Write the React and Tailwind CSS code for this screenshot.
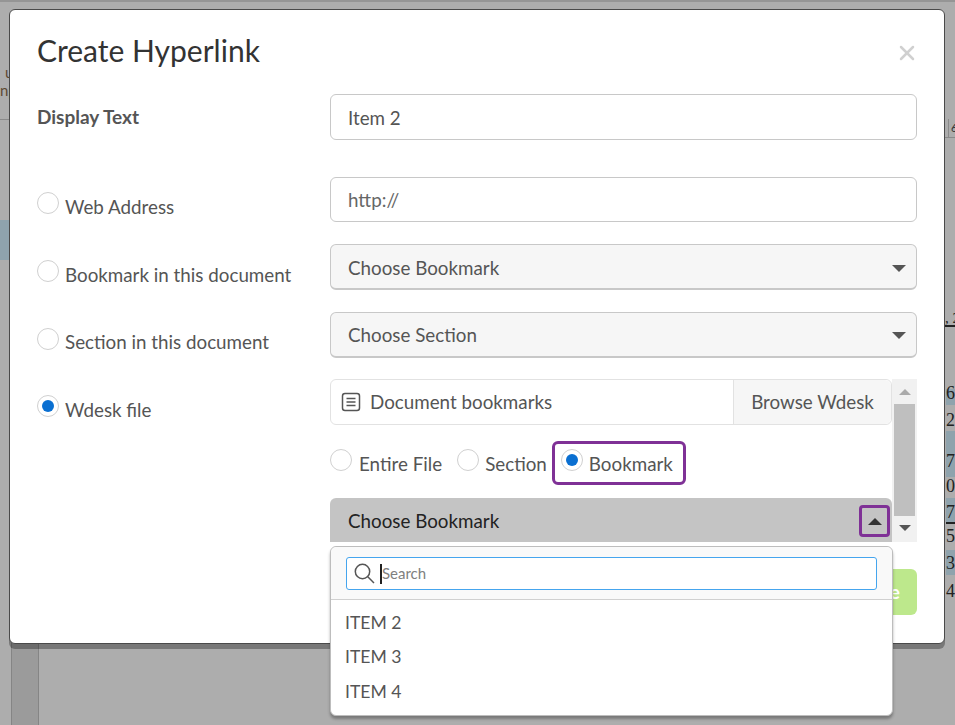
import { X } from 'lucide-react'

const CaretDown = () => <span className="h-0 w-0 border-x-[7px] border-t-[7px] border-x-transparent border-t-[#555]" />

const Radio = ({ checked, className = '' }) => (
  <span className={`flex h-[22px] w-[22px] shrink-0 items-center justify-center rounded-full border border-[#d0d0d0] bg-white ${className}`}>
    {checked && <span className="h-3 w-3 rounded-full bg-[#0a6fd1]" />}
  </span>
)

function OptionRow({ label, checked, className = '', top = 'pt-[16px]', labelTop = 'mt-[2px]', children }) {
  return (
    <div className={`flex ${className}`}>
      <div className={`flex w-[293px] shrink-0 items-start ${top}`}>
        <Radio checked={checked} />
        <span className={`ml-[6px] text-[18.8px] leading-[26px] text-[#555] ${labelTop}`}>{label}</span>
      </div>
      {children}
    </div>
  )
}

const SelectBox = ({ label, className = 'pt-[2px]' }) => (
  <div className={`flex h-[46px] w-[587px] items-center justify-between rounded-md border border-b-2 border-[#c8c8c8] bg-[#f6f6f6] pl-[17px] pr-[10px] text-[18.8px] text-[#555] ${className}`}>
    {label}
    <CaretDown />
  </div>
)

const tableRows = [
  { t: '6', h: 16, pt: 0, blue: true },
  { t: '2', h: 26, pt: 11 },
  { t: '7', h: 46, pt: 26, blue: true },
  { t: '0', h: 21, pt: 5 },
  { t: '7', h: 26, pt: 10, blue: true, line: true },
  { t: '5', h: 26, pt: 8 },
  { t: '3', h: 25, pt: 9, blue: true },
  { t: '4', h: 30, pt: 12 },
]

export default function App() {
  return (
    <div className="relative h-[725px] w-[955px] overflow-hidden bg-[#adadad] font-['Lato','Open_Sans',sans-serif]">
      {/* dimmed document behind the modal */}
      <div className="absolute inset-x-0 top-0 h-[2px] bg-[#959595]" />
      <div className="absolute left-0 top-[63px] text-[15px] leading-[18px] text-[#5e4a33]">
        <div className="ml-[5px]">u</div>
        <div>np</div>
      </div>
      <div className="absolute left-0 top-[119px] h-px w-[10px] bg-[#8a8a8a]" />
      <div className="absolute left-0 top-[220px] h-[40px] w-[10px] bg-[#8fa3ad]" />
      <div className="absolute left-[11px] top-[640px] h-[85px] w-[28px] border-x border-[#858585] bg-[#9b9b9b]" />
      <div className="absolute left-[945px] top-[119px] h-[19px] w-[10px] overflow-hidden border-b border-[#8a8a8a] pl-[3px]">
        <div className="h-full border-l border-[#8a8a8a] pl-[2px] text-[11px] leading-[17px] text-[#333]">6</div>
      </div>
      <div className="absolute left-[945px] top-[306px] h-[21px] w-[10px] overflow-hidden whitespace-nowrap border-b-2 border-[#222] font-['Liberation_Serif',serif] text-[15px] leading-[24px] text-[#222]">, 2</div>
      <div className="absolute left-[946px] top-[389px] flex w-[9px] flex-col font-['Liberation_Serif',serif] text-[18px] leading-[8px] text-[#222]">
        {tableRows.map((r, i) => (
          <div
            key={i}
            style={{ height: r.h, paddingTop: r.pt }}
            className={`${r.blue ? 'bg-[#8fa3ad]' : ''} ${r.line ? 'border-b-2 border-[#222]' : ''}`}
          >
            {r.t}
          </div>
        ))}
      </div>

      {/* modal */}
      <div className="relative ml-[9px] mt-[9px] inline-block h-[635px] w-[936px] rounded-md border border-[#4a4a4a] bg-white pl-[27px] pr-[27px] align-top shadow-[0_5px_0_rgba(0,0,0,0.3)]">
        <div className="flex items-center justify-between pt-[17px]">
          <h1 className="text-[30px] font-normal leading-[47px] text-[#333]">Create Hyperlink</h1>
          <X size={24} strokeWidth={2.5} className="-mr-[2px] mt-[5px] text-[#d0d0d0]" />
        </div>

        <div className="mt-[20px] flex">
          <div className="w-[293px] shrink-0 pt-[10px] text-[19px] font-bold leading-[26px] text-[#555]">Display Text</div>
          <div className="flex h-[46px] flex-1 items-center rounded-md border border-[#c8c8c8] pl-[17px] pt-[2px] text-[18.8px] text-[#555]">Item 2</div>
        </div>

        <OptionRow label="Web Address" className="mt-[37px]" top="pt-[15px]">
          <div className="flex h-[45px] flex-1 items-center rounded-md border border-[#c8c8c8] pl-[17px] pt-[2px] text-[18.8px] text-[#666]">http://</div>
        </OptionRow>

        <OptionRow label="Bookmark in this document" className="mt-[22px]">
          <SelectBox label="Choose Bookmark" className="pt-[3px]" />
        </OptionRow>

        <OptionRow label="Section in this document" className="mt-[22px]" labelTop="mt-[1px]">
          <SelectBox label="Choose Section" />
        </OptionRow>

        <OptionRow label="Wdesk file" checked className="mt-[21px]">
          <div className="flex h-[163px] w-[587px] overflow-hidden">
            <div className="w-[562px] shrink-0">
              <div className="flex h-[46px] items-stretch rounded-md border border-[#e2e2e2]">
                <div className="flex flex-1 items-center pl-[10px] text-[18.8px] text-[#555]">
                  <svg width="20" height="20" viewBox="0 0 20 20" fill="none" stroke="#555" strokeWidth="1.5">
                    <rect x="1.5" y="1.5" width="17" height="17" rx="2.5" />
                    <path d="M5.5 6.5h9M5.5 10h9M5.5 13.5h9" />
                  </svg>
                  <span className="ml-[9px]">Document bookmarks</span>
                </div>
                <div className="flex w-[158px] items-center justify-center rounded-r-md border-l border-[#e2e2e2] bg-[#f6f6f6] text-[18.8px] text-[#555]">Browse Wdesk</div>
              </div>
              <div className="mt-[16px] flex h-[44px] items-center text-[18.8px] text-[#555]">
                <Radio className="-mt-[6px]" />
                <span className="ml-[7px] mt-[2px]">Entire File</span>
                <Radio className="-mt-[6px] ml-[15px]" />
                <span className="ml-[6px] mt-[2px]">Section</span>
                <div className="ml-[5px] flex h-[44px] w-[134px] items-center rounded-md border-[3px] border-[#7f3196] pl-[6px]">
                  <Radio checked className="-mt-[6px]" />
                  <span className="ml-[6px] mt-[2px]">Bookmark</span>
                </div>
              </div>
              <div className="mt-[13px] flex h-[44px] items-start justify-between rounded-t-md bg-[#c4c4c4] pl-[18px] pr-[2px] text-[18.8px] text-[#222]">
                <span className="leading-[46px]">Choose Bookmark</span>
                <span className="mt-[7px] flex h-[32px] w-[31px] items-center justify-center rounded border-[3px] border-[#7f3196]">
                  <span className="h-0 w-0 border-x-[7px] border-b-[7px] border-x-transparent border-b-[#333]" />
                </span>
              </div>
            </div>
            <div className="flex w-[25px] flex-col items-center bg-[#f1f1f1] pt-[10px]">
              <span className="h-0 w-0 border-x-[6px] border-b-[6px] border-x-transparent border-b-[#aaa]" />
              <div className="mt-[9px] h-[112px] w-[21px] bg-[#bfbfbf]" />
              <span className="mt-[9px] h-0 w-0 border-x-[6px] border-t-[6px] border-x-transparent border-t-[#555]" />
            </div>
          </div>
        </OptionRow>

        <div className="absolute right-[27px] top-[559px] flex h-[46px] w-[120px] items-center justify-end rounded-md bg-[#bde88c] pr-[17px] text-[19px] font-bold text-white">Save</div>
      </div>

      {/* bookmark dropdown */}
      <div className="absolute left-[330px] top-[546px] w-[563px] rounded-md border border-[#bdbdbd] bg-white shadow-[0_3px_3px_rgba(0,0,0,0.3)]">
        <div className="rounded-t-md border-b border-[#d0d0d0] bg-[#f9f9f9] px-[15px] pb-[9px] pt-[10px]">
          <div className="flex h-[33px] items-center rounded-[3px] border border-[#45a5ee] bg-white pl-[7px]">
            <svg width="21" height="21" viewBox="0 0 21 21" fill="none" stroke="#555" strokeWidth="1.5">
              <circle cx="8.5" cy="8.5" r="7.2" />
              <path d="M13.8 13.8l6.2 6.2" />
            </svg>
            <span className="ml-[5px] h-[20px] w-[2px] shrink-0 bg-[#222]" />
            <span className="text-[15px] text-[#808080]">Search</span>
          </div>
        </div>
        <div className="px-[14px] pb-[6px] pt-[5.7px] text-[17.6px] leading-[34.5px] text-[#555]">
          <div>ITEM 2</div>
          <div>ITEM 3</div>
          <div>ITEM 4</div>
        </div>
      </div>
    </div>
  )
}
